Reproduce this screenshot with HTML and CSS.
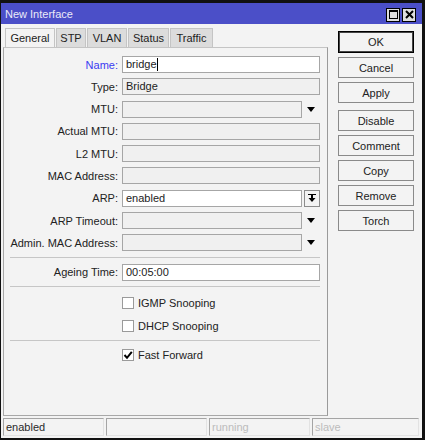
FILE: index.html
```html
<!DOCTYPE html>
<html lang="en">
<head>
    <meta charset="UTF-8">
    <meta name="viewport" content="width=device-width, initial-scale=1.0">
    <title>New Interface</title>
    <link rel="stylesheet" href="styles.css">
</head>
<body>
    <div class="window">
        <div class="titlebar">
            <span class="title">New Interface</span>
            <div class="title-btns">
                <div class="title-btn">
                    <svg width="11" height="11" viewBox="0 0 11 11">
                        <rect x="1.5" y="1.5" width="8" height="8" fill="none" stroke="#000" stroke-width="1"/>
                        <rect x="1" y="1" width="9" height="2" fill="#000"/>
                    </svg>
                </div>
                <div class="title-btn">
                    <svg width="11" height="11" viewBox="0 0 11 11">
                        <path d="M2 2 L9 9 M9 2 L2 9" stroke="#000" stroke-width="2"/>
                    </svg>
                </div>
            </div>
        </div>

        <div class="content">
            <div class="main">
                <div class="tabs">
                    <div class="tab active">General</div>
                    <div class="tab">STP</div>
                    <div class="tab">VLAN</div>
                    <div class="tab">Status</div>
                    <div class="tab">Traffic</div>
                </div>

                <div class="panel">
                    <div class="row">
                        <label class="label focus">Name:</label>
                        <div class="field edit">bridge<span class="caret"></span></div>
                    </div>
                    <div class="row">
                        <label class="label">Type:</label>
                        <div class="field">Bridge</div>
                    </div>
                    <div class="row">
                        <label class="label">MTU:</label>
                        <div class="field short"></div>
                        <span class="drop"></span>
                    </div>
                    <div class="row">
                        <label class="label">Actual MTU:</label>
                        <div class="field"></div>
                    </div>
                    <div class="row">
                        <label class="label">L2 MTU:</label>
                        <div class="field"></div>
                    </div>
                    <div class="row">
                        <label class="label">MAC Address:</label>
                        <div class="field"></div>
                    </div>
                    <div class="row">
                        <label class="label">ARP:</label>
                        <div class="field edit short">enabled</div>
                        <div class="mini-btn">
                            <svg width="10" height="10" viewBox="0 0 10 10">
                                <rect x="1" y="1" width="8" height="1" fill="#000"/>
                                <rect x="4" y="2" width="2" height="3" fill="#000"/>
                                <path d="M1.5 5 L8.5 5 L5 9 Z" fill="#000"/>
                            </svg>
                        </div>
                    </div>
                    <div class="row">
                        <label class="label">ARP Timeout:</label>
                        <div class="field short"></div>
                        <span class="drop"></span>
                    </div>
                    <div class="row">
                        <label class="label">Admin. MAC Address:</label>
                        <div class="field short"></div>
                        <span class="drop"></span>
                    </div>

                    <div class="sep sep-1"></div>

                    <div class="row">
                        <label class="label">Ageing Time:</label>
                        <div class="field edit">00:05:00</div>
                    </div>

                    <div class="sep sep-2"></div>

                    <div class="row check-row">
                        <span class="check"></span>
                        <span class="check-text">IGMP Snooping</span>
                    </div>
                    <div class="row check-row">
                        <span class="check"></span>
                        <span class="check-text">DHCP Snooping</span>
                    </div>

                    <div class="sep sep-3"></div>

                    <div class="row check-row">
                        <span class="check">
                            <svg width="10" height="10" viewBox="0 0 10 10">
                                <path d="M1.5 5 L4 7.8 L8.8 1.8" fill="none" stroke="#000" stroke-width="2"/>
                            </svg>
                        </span>
                        <span class="check-text">Fast Forward</span>
                    </div>
                </div>
            </div>

            <div class="buttons">
                <button type="button" class="btn default">OK</button>
                <button type="button" class="btn">Cancel</button>
                <button type="button" class="btn">Apply</button>
                <button type="button" class="btn spaced">Disable</button>
                <button type="button" class="btn">Comment</button>
                <button type="button" class="btn">Copy</button>
                <button type="button" class="btn">Remove</button>
                <button type="button" class="btn">Torch</button>
            </div>
        </div>

        <div class="statusbar">
            <div class="cell">enabled</div>
            <div class="cell"></div>
            <div class="cell dim">running</div>
            <div class="cell dim last">slave</div>
        </div>
    </div>
</body>
</html>
```

FILE: styles.css
```css
body {
    margin: 0;
    padding: 0;
    font-family: "Liberation Sans", Arial, sans-serif;
    font-size: 11px;
    color: #222;
    background-color: #fff;
}

.window {
    box-sizing: border-box;
    width: 425px;
    height: 440px;
    border-style: solid;
    border-color: #111;
    border-width: 3px 3px 2px 1px;
    background-color: #f3f3f3;
    display: flex;
    flex-direction: column;
}

/* Title bar */
.titlebar {
    height: 21px;
    background-color: #4b4fc8;
    display: flex;
    align-items: center;
    justify-content: space-between;
    padding-left: 4px;
}

.title {
    color: #eceaf8;
    font-size: 11px;
}

.title-btns {
    display: flex;
    gap: 2px;
    margin-right: 6px;
    margin-top: 2px;
}

.title-btn {
    box-sizing: border-box;
    width: 14px;
    height: 14px;
    border: 1px solid #000;
    background-color: #dedede;
    display: flex;
    align-items: center;
    justify-content: center;
}

/* Main area */
.content {
    display: flex;
    height: 392px;
}

.main {
    display: flex;
    flex-direction: column;
    padding-left: 2px;
}

.tabs {
    display: flex;
    margin-top: 4px;
    margin-left: 2px;
    gap: 1px;
}

.tab {
    box-sizing: border-box;
    height: 19px;
    display: flex;
    align-items: center;
    justify-content: center;
    background-color: #dcdcdc;
    border: 1px solid #c4c4c4;
    border-bottom: none;
    font-size: 11px;
    color: #222;
}

.tab.active {
    background-color: #f3f3f3;
    width: 50px;
}

.tab:nth-child(2) {
    width: 30px;
}

.tab:nth-child(3) {
    width: 40px;
}

.tab:nth-child(4) {
    width: 41px;
}

.tab:nth-child(5) {
    width: 43px;
}

.panel {
    box-sizing: border-box;
    width: 325px;
    flex: 1;
    border: 1px solid #a8a8a8;
    border-top-color: #c4c4c4;
    border-right-color: #9a9a9a;
    padding-top: 8px;
}

.row {
    display: flex;
    align-items: center;
    height: 17px;
    margin-bottom: 5.3px;
}

.label {
    width: 114px;
    text-align: right;
    margin-right: 4px;
    color: #222;
    white-space: nowrap;
}

.label.focus {
    color: #3a3af2;
}

.field {
    box-sizing: border-box;
    width: 198px;
    height: 17px;
    border: 1px solid #a6a6a6;
    background-color: #f0f0f0;
    padding-left: 3px;
    line-height: 15px;
    color: #222;
    display: flex;
    align-items: center;
}

.field.edit {
    background-color: #fff;
}

.field.short {
    width: 180px;
}

.caret {
    display: inline-block;
    width: 1px;
    height: 13px;
    background-color: #000;
}

.drop {
    width: 0;
    height: 0;
    margin-left: 5px;
    border-left: 4.5px solid transparent;
    border-right: 4.5px solid transparent;
    border-top: 5px solid #000;
}

.mini-btn {
    box-sizing: border-box;
    width: 16px;
    height: 17px;
    margin-left: 2px;
    border: 1px solid #8c8c8c;
    background-color: #f3f3f3;
    display: flex;
    align-items: center;
    justify-content: center;
}

.sep {
    height: 1px;
    width: 310px;
    margin-left: 6px;
    background-color: #c6c6c6;
}

.sep-1 {
    margin-top: 3.4px;
    margin-bottom: 6px;
}

.sep-2 {
    margin-top: 1px;
    margin-bottom: 8px;
}

.sep-3 {
    margin-top: 2.7px;
    margin-bottom: 6px;
}

.check-row {
    padding-left: 118px;
}

.check {
    box-sizing: border-box;
    width: 12px;
    height: 12px;
    border: 1px solid #9a9a9a;
    background-color: #fff;
    display: flex;
    align-items: center;
    justify-content: center;
}

.check-text {
    margin-left: 4px;
    color: #222;
}

/* Right column */
.buttons {
    display: flex;
    flex-direction: column;
    gap: 4px;
    margin-left: 10px;
    padding-top: 7px;
}

.btn {
    box-sizing: border-box;
    width: 76px;
    height: 21px;
    margin: 0;
    padding: 0;
    border: 1px solid #8a8a8a;
    background-color: #f3f3f3;
    font-family: "Liberation Sans", Arial, sans-serif;
    font-size: 11px;
    color: #222;
}

.btn.default {
    height: 22px;
    border: 1px solid #000;
    box-shadow: inset 0 0 0 1px #444;
}

.btn.spaced {
    margin-top: 3px;
}

/* Status bar */
.statusbar {
    display: flex;
    gap: 2px;
    margin-top: 2px;
    padding-left: 2px;
    height: 18px;
}

.cell {
    box-sizing: border-box;
    width: 101px;
    height: 18px;
    border: 1px solid #e2e2e2;
    border-top-color: #a4a4a4;
    border-left-color: #a4a4a4;
    padding-left: 2px;
    line-height: 16px;
    color: #2a2a2a;
}

.cell.dim {
    color: #bcbcbc;
}

.cell.last {
    width: 107px;
}
```
